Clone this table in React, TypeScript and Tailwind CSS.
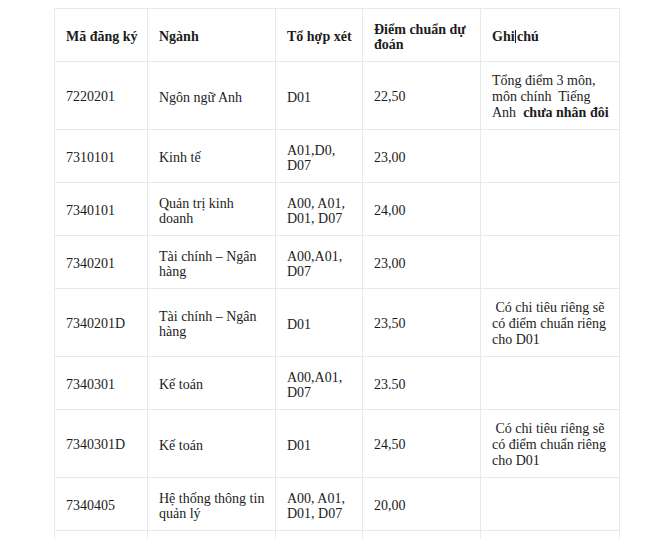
import React from 'react'

type Row = {
  code: string
  name: React.ReactNode
  combo: React.ReactNode
  score: string
  note?: React.ReactNode
  tall?: boolean
}

const specialNote = (
  <>
    {'\u00a0'}Có chi tiêu riêng sẽ
    <br />
    có điểm chuẩn riêng
    <br />
    cho D01
  </>
)

const rows: Row[] = [
  {
    code: '7220201',
    name: 'Ngôn ngữ Anh',
    combo: 'D01',
    score: '22,50',
    tall: true,
    note: (
      <>
        Tổng điểm 3 môn,
        <br />
        môn chính{'\u00a0'} Tiếng
        <br />
        Anh{'\u00a0'} <b>chưa nhân đôi</b>
      </>
    ),
  },
  { code: '7310101', name: 'Kinh tế', combo: <>A01,D0,<br />D07</>, score: '23,00' },
  { code: '7340101', name: <>Quản trị kinh<br />doanh</>, combo: <>A00, A01,<br />D01, D07</>, score: '24,00' },
  { code: '7340201', name: <>Tài chính – Ngân<br />hàng</>, combo: <>A00,A01,<br />D07</>, score: '23,00' },
  { code: '7340201D', name: <>Tài chính – Ngân<br />hàng</>, combo: 'D01', score: '23,50', note: specialNote, tall: true },
  { code: '7340301', name: 'Kế toán', combo: <>A00,A01,<br />D07</>, score: '23.50' },
  { code: '7340301D', name: 'Kế toán', combo: 'D01', score: '24,50', note: specialNote, tall: true },
  { code: '7340405', name: <>Hệ thống thông tin<br />quản lý</>, combo: <>A00, A01,<br />D01, D07</>, score: '20,00' },
]

const cell = 'border border-[#e9e9e9] align-middle px-[11px] pt-[11px] pb-[8px] text-left whitespace-nowrap'

export default function App() {
  return (
    <div className="w-[645px] h-[539px] overflow-hidden bg-white pt-[8px] pl-[54px] [font-family:'Liberation_Serif',serif] text-[14px] leading-[16px] text-[#1c1c1c]">
      <table className="table-fixed border-collapse w-[566px]">
        <colgroup>
          <col className="w-[93px]" />
          <col className="w-[128px]" />
          <col className="w-[87px]" />
          <col className="w-[118px]" />
          <col className="w-[139px]" />
        </colgroup>
        <thead>
          <tr className="h-[53px] font-bold">
            <th className={cell}>Mã đăng ký</th>
            <th className={cell}>Ngành</th>
            <th className={cell}>Tổ hợp xét</th>
            <th className={`${cell} leading-[15px]`}>Điểm chuẩn dự<br />đoán</th>
            <th className={cell}>
              Ghi <span className="inline-block w-px h-[13px] bg-[#1c1c1c] align-[-2px] -ml-[3px] mr-[1px]" />chú
            </th>
          </tr>
        </thead>
        <tbody>
          {rows.map((r) => (
            <tr key={r.code} className={r.tall ? 'h-[68px]' : 'h-[53px]'}>
              <td className={cell}>{r.code}</td>
              <td className={`${cell} leading-[15px]`}>{r.name}</td>
              <td className={`${cell} leading-[15px]`}>{r.combo}</td>
              <td className={cell}>{r.score}</td>
              <td className={cell}>{r.note}</td>
            </tr>
          ))}
          <tr className="h-[53px]">
            <td className={cell} />
            <td className={cell} />
            <td className={cell} />
            <td className={cell} />
            <td className={cell} />
          </tr>
        </tbody>
      </table>
    </div>
  )
}
